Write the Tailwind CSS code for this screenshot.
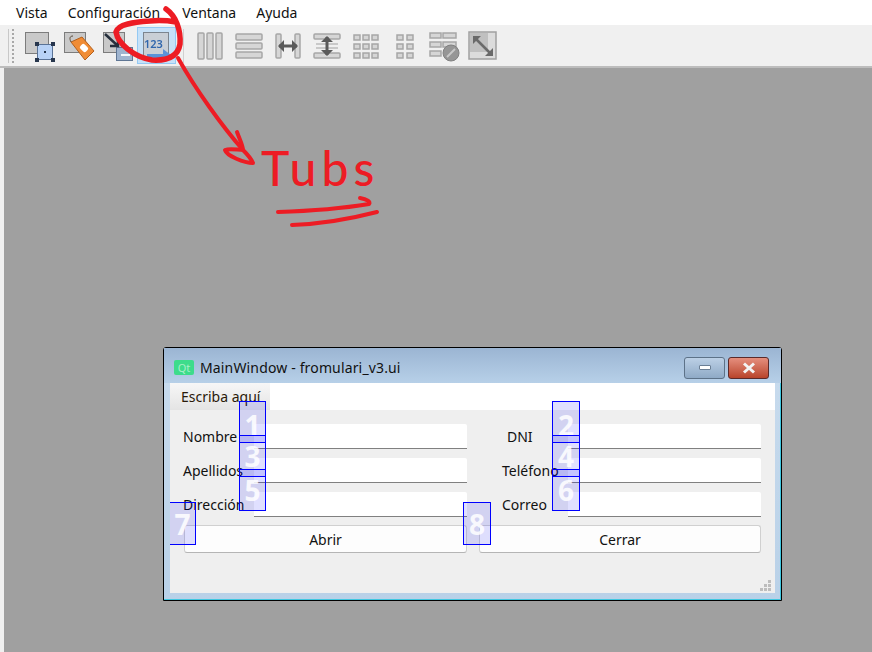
<!DOCTYPE html>
<html lang="en">

<head>
    <meta charset="UTF-8">
    <title>Qt Designer - Tabs</title>
    <script src="https://cdn.jsdelivr.net/npm/@tailwindcss/browser@4"></script>
</head>

<body class="w-[872px] h-[652px] overflow-hidden bg-[#f0f0f0] font-['Noto_Sans',sans-serif] text-[14px] text-[#111]">
    <div class="relative w-[872px] h-[652px] flex flex-col">

        <!-- Menu bar -->
        <nav class="h-[25px] bg-white flex items-center pl-[16px]">
            <span>Vista</span>
            <span class="ml-[20px]">Configuración</span>
            <span class="ml-[22px]">Ventana</span>
            <span class="ml-[20px]">Ayuda</span>
        </nav>

        <!-- Toolbar -->
        <div class="h-[43px] bg-[#f0f0f0] border-b-2 border-[#bdbdbd] flex items-center pl-[8px]">
            <div class="w-px h-[34px] bg-[#c8c8c8]"></div>
            <div class="w-[3px] h-[34px] ml-[3px] border-l-2 border-dotted border-[#a8a8a8]"></div>

            <div class="w-[39px] ml-[5px] flex justify-center blur-[0.4px]">
                <svg width="32" height="32" viewBox="0 0 32 32">
                    <rect x="1.5" y="2.5" width="23" height="21" fill="#c9c9c9" stroke="#7c7c7c" />
                    <rect x="13.5" y="14.5" width="15" height="15" fill="#b8d2f6" stroke="#5a7396" />
                    <rect x="11" y="12" width="4" height="4" fill="#27364d" />
                    <rect x="27" y="12" width="4" height="4" fill="#27364d" />
                    <rect x="11" y="28" width="4" height="4" fill="#27364d" />
                    <rect x="27" y="28" width="4" height="4" fill="#27364d" />
                    <rect x="20" y="21" width="2" height="2" fill="#27364d" />
                </svg>
            </div>
            <div class="w-[39px] flex justify-center blur-[0.4px]">
                <svg width="32" height="32" viewBox="0 0 32 32">
                    <rect x="1.5" y="2.5" width="21" height="20" fill="#c9c9c9" stroke="#7c7c7c" />
                    <path d="M8 12 L19 7 L31 21 L22 30 Z" fill="#f08c35" stroke="#b35f1c" />
                    <rect x="17" y="15" width="8" height="6" rx="2" transform="rotate(45 21 18)" fill="#fff" />
                    <path d="M8 12 C6 8 7 6 10 6" fill="none" stroke="#5a4a3a" />
                </svg>
            </div>
            <div class="w-[39px] flex justify-center blur-[0.4px]">
                <svg width="32" height="32" viewBox="0 0 32 32">
                    <rect x="1.5" y="2.5" width="21" height="20" fill="#c9c9c9" stroke="#7c7c7c" />
                    <rect x="14.5" y="17.5" width="16" height="13" fill="#9fb4cf" stroke="#5f7694" />
                    <rect x="19" y="24" width="9" height="2" fill="#f4f7fb" />
                    <path d="M3 4 L16 16 M16 8 L16 16 L8 16" fill="none" stroke="#26303d" stroke-width="2.5" />
                </svg>
            </div>
            <div class="w-[39px] h-[37px] bg-[#c6e1f8] border border-[#94c9f3] flex justify-center items-center">
                <svg class="blur-[0.4px]" width="32" height="32" viewBox="0 0 32 32">
                    <rect x="2.5" y="2.5" width="25" height="25" fill="#c9cfd6" stroke="#7c858f" />
                    <text x="3" y="18" font-size="11" font-family="Noto Sans" font-weight="600" fill="#2f66ad">123</text>
                    <path d="M6 24 H22 V19 L30 25 L22 31 V28 H6 Z" fill="#5a93d8" />
                </svg>
            </div>

            <div class="w-[14px] flex justify-center">
                <div class="w-px h-[34px] bg-[#d0d0d0]"></div>
            </div>

            <div class="w-[39px] flex justify-center blur-[0.4px]">
                <svg width="32" height="32" viewBox="0 0 32 32" fill="#d6d6d6" stroke="#a6a6a6" stroke-width="1.5">
                    <rect x="4" y="3" width="6" height="26" rx="1" />
                    <rect x="13" y="3" width="6" height="26" rx="1" />
                    <rect x="22" y="3" width="6" height="26" rx="1" />
                </svg>
            </div>
            <div class="w-[39px] flex justify-center blur-[0.4px]">
                <svg width="32" height="32" viewBox="0 0 32 32" fill="#d6d6d6" stroke="#a6a6a6" stroke-width="1.5">
                    <rect x="3" y="4" width="26" height="6" rx="1" />
                    <rect x="3" y="13" width="26" height="6" rx="1" />
                    <rect x="3" y="22" width="26" height="6" rx="1" />
                </svg>
            </div>
            <div class="w-[39px] flex justify-center blur-[0.4px]">
                <svg width="32" height="32" viewBox="0 0 32 32">
                    <rect x="4" y="4" width="5" height="24" rx="1" fill="#d6d6d6" stroke="#a6a6a6" stroke-width="1.5" />
                    <rect x="23" y="4" width="5" height="24" rx="1" fill="#d6d6d6" stroke="#a6a6a6" stroke-width="1.5" />
                    <path d="M7 16 H25" stroke="#5a5a5a" stroke-width="3" />
                    <path d="M12 10 L6 16 L12 22 Z M20 10 L26 16 L20 22 Z" fill="#5a5a5a" />
                </svg>
            </div>
            <div class="w-[39px] flex justify-center blur-[0.4px]">
                <svg width="32" height="32" viewBox="0 0 32 32">
                    <rect x="3" y="4" width="26" height="5" rx="1" fill="#d6d6d6" stroke="#a6a6a6" stroke-width="1.5" />
                    <rect x="3" y="23" width="26" height="5" rx="1" fill="#d6d6d6" stroke="#a6a6a6" stroke-width="1.5" />
                    <path d="M5 14 H27 M5 18 H27" stroke="#bcbcbc" stroke-width="1.5" />
                    <path d="M16 7 V25" stroke="#5a5a5a" stroke-width="3" />
                    <path d="M10 12 L16 6 L22 12 Z M10 20 L16 26 L22 20 Z" fill="#5a5a5a" />
                </svg>
            </div>
            <div class="w-[39px] flex justify-center blur-[0.4px]">
                <svg width="32" height="32" viewBox="0 0 32 32" fill="#d6d6d6" stroke="#a6a6a6" stroke-width="1.5">
                    <rect x="4" y="5" width="6" height="5" /><rect x="13" y="5" width="6" height="5" /><rect x="22" y="5" width="6" height="5" />
                    <rect x="4" y="14" width="6" height="5" /><rect x="13" y="14" width="6" height="5" /><rect x="22" y="14" width="6" height="5" />
                    <rect x="4" y="23" width="6" height="5" /><rect x="13" y="23" width="6" height="5" /><rect x="22" y="23" width="6" height="5" />
                </svg>
            </div>
            <div class="w-[39px] flex justify-center blur-[0.4px]">
                <svg width="32" height="32" viewBox="0 0 32 32" fill="#d6d6d6" stroke="#a6a6a6" stroke-width="1.5">
                    <rect x="8" y="5" width="6" height="5" /><rect x="18" y="5" width="6" height="5" />
                    <rect x="8" y="14" width="6" height="5" /><rect x="18" y="14" width="6" height="5" />
                    <rect x="8" y="23" width="6" height="5" /><rect x="18" y="23" width="6" height="5" />
                </svg>
            </div>
            <div class="w-[39px] flex justify-center blur-[0.4px]">
                <svg width="32" height="32" viewBox="0 0 32 32">
                    <g fill="#d6d6d6" stroke="#a6a6a6" stroke-width="1.5">
                        <rect x="2" y="3" width="11" height="5" /><rect x="15" y="3" width="13" height="5" />
                        <rect x="2" y="12" width="11" height="5" /><rect x="15" y="12" width="13" height="5" />
                        <rect x="2" y="21" width="11" height="5" />
                    </g>
                    <circle cx="23" cy="23" r="8" fill="#969696" stroke="#808080" />
                    <path d="M19 27 L27 19" stroke="#c8c8c8" stroke-width="2" />
                </svg>
            </div>
            <div class="w-[39px] flex justify-center blur-[0.4px]">
                <svg width="32" height="32" viewBox="0 0 32 32">
                    <rect x="2" y="2" width="27" height="27" fill="#dcdcdc" stroke="#a0a0a0" stroke-width="1.5" />
                    <rect x="3" y="3" width="18" height="19" fill="#c0c0c0" />
                    <path d="M8 8 L24 24" stroke="#6a6a6a" stroke-width="2.5" />
                    <path d="M6 14 V6 H14 Z M26 18 V26 H18 Z" fill="#6a6a6a" />
                </svg>
            </div>
        </div>

        <!-- Designer canvas -->
        <main class="flex-1 ml-[4px] bg-[#a0a0a0]"></main>

        <!-- Preview window -->
        <section class="absolute left-[163px] top-[347px] w-[619px] h-[254px] border border-black rounded-t-[3px] bg-gradient-to-b from-[#c9dcee] to-[#b9d1e8] shadow-[inset_-1px_-1px_0_#3fc7e0] flex flex-col">
            <header class="h-[35px] shrink-0 bg-gradient-to-b from-[#9bb5d3] to-[#b7d0e8] flex items-center pt-[4px] pl-[10px] pr-[12px]">
                <div class="w-[20px] h-[15px] rounded-[2px] bg-[#3ddc8b] text-[#a8efc9] text-[11px] leading-[15px] text-center">Qt</div>
                <span class="ml-[6px] text-[14px] tracking-[0.15px]">MainWindow - fromulari_v3.ui</span>
                <div class="ml-auto flex gap-[3px]">
                    <div class="w-[41px] h-[22px] rounded-[3px] border border-[#5d7288] bg-gradient-to-b from-[#bcd0e6] to-[#8faac6] flex items-center justify-center">
                        <div class="w-[12px] h-[5px] bg-white border border-[#6b7f95] rounded-[1px]"></div>
                    </div>
                    <div class="w-[41px] h-[22px] rounded-[3px] border border-[#5b2a2a] bg-gradient-to-b from-[#e58f7e] to-[#b8432a] flex items-center justify-center">
                        <svg width="14" height="12" viewBox="0 0 14 12">
                            <path d="M2 1.5 L12 10.5 M12 1.5 L2 10.5" stroke="#f3f3f3" stroke-width="3" />
                        </svg>
                    </div>
                </div>
            </header>

            <div class="flex-1 mx-[6px] mb-[7px] bg-[#efefef] flex flex-col">
                <div class="h-[27px] bg-white">
                    <div class="w-[100px] h-[27px] pl-[11px] leading-[27px] bg-gradient-to-b from-[#f7f7f7] to-[#e4e4e4] text-[#2a1a0a]">Escriba aquí</div>
                </div>

                <!-- Form rows -->
                <div class="pl-[13px] pr-[13px] pt-[14px] grid grid-cols-[71px_213px_12px_89px_193px] auto-rows-[25px] gap-y-[9px] items-center">
                    <span>Nombre</span>
                    <div class="h-[25px] bg-white border-b border-[#808080] rounded-t-[2px]"></div>
                    <span></span>
                    <span class="pl-[28px]">DNI</span>
                    <div class="h-[25px] bg-white border-b border-[#808080] rounded-t-[2px]"></div>

                    <span>Apellidos</span>
                    <div class="h-[25px] bg-white border-b border-[#808080] rounded-t-[2px]"></div>
                    <span></span>
                    <span class="pl-[23px]">Teléfono</span>
                    <div class="h-[25px] bg-white border-b border-[#808080] rounded-t-[2px]"></div>

                    <span>Dirección</span>
                    <div class="h-[25px] bg-white border-b border-[#808080] rounded-t-[2px]"></div>
                    <span></span>
                    <span class="pl-[23px]">Correo</span>
                    <div class="h-[25px] bg-white border-b border-[#808080] rounded-t-[2px]"></div>
                </div>

                <div class="pl-[14px] pr-[13px] pt-[8px] flex gap-[12px]">
                    <button class="w-[283px] h-[28px] bg-[#fdfdfd] border border-[#d0d0d0] border-b-[#b5b5b5] rounded-[3px]">Abrir</button>
                    <button class="w-[282px] h-[28px] bg-[#fdfdfd] border border-[#d0d0d0] border-b-[#b5b5b5] rounded-[3px]">Cerrar</button>
                </div>
            </div>

            <!-- Size grip -->
            <svg class="absolute right-[9px] bottom-[8px]" width="12" height="12" viewBox="0 0 12 12" fill="#bdbdbd">
                <rect x="8" y="0" width="3" height="3" />
                <rect x="4" y="4" width="3" height="3" /><rect x="8" y="4" width="3" height="3" />
                <rect x="0" y="8" width="3" height="3" /><rect x="4" y="8" width="3" height="3" /><rect x="8" y="8" width="3" height="3" />
            </svg>
        </section>

        <!-- Tab order badges -->
        <div class="absolute left-[239px] top-[401px] w-[27px] h-[42px] pt-[6px] border-[1.5px] border-[#0000ff] bg-[#0000ff]/12 flex items-center justify-center text-white/85 font-bold text-[28px] leading-none font-['Open_Sans',sans-serif]">1</div>
        <div class="absolute left-[239px] top-[435px] w-[27px] h-[42px] border-[1.5px] border-[#0000ff] bg-[#0000ff]/12 flex items-center justify-center text-white/85 font-bold text-[28px] leading-none font-['Open_Sans',sans-serif]">3</div>
        <div class="absolute left-[239px] top-[469px] w-[27px] h-[42px] border-[1.5px] border-[#0000ff] bg-[#0000ff]/12 flex items-center justify-center text-white/85 font-bold text-[28px] leading-none font-['Open_Sans',sans-serif]">5</div>
        <div class="absolute left-[552px] top-[401px] w-[28px] h-[42px] pt-[6px] border-[1.5px] border-[#0000ff] bg-[#0000ff]/12 flex items-center justify-center text-white/85 font-bold text-[28px] leading-none font-['Open_Sans',sans-serif]">2</div>
        <div class="absolute left-[552px] top-[435px] w-[28px] h-[42px] border-[1.5px] border-[#0000ff] bg-[#0000ff]/12 flex items-center justify-center text-white/85 font-bold text-[28px] leading-none font-['Open_Sans',sans-serif]">4</div>
        <div class="absolute left-[552px] top-[469px] w-[28px] h-[42px] border-[1.5px] border-[#0000ff] bg-[#0000ff]/12 flex items-center justify-center text-white/85 font-bold text-[28px] leading-none font-['Open_Sans',sans-serif]">6</div>
        <div class="absolute left-[170px] top-[502px] w-[26px] h-[43px] border-[1.5px] border-l-0 border-[#0000ff] bg-[#0000ff]/12 flex items-center justify-center text-white/85 font-bold text-[28px] leading-none font-['Open_Sans',sans-serif]">7</div>
        <div class="absolute left-[463px] top-[502px] w-[28px] h-[43px] border-[1.5px] border-[#0000ff] bg-[#0000ff]/12 flex items-center justify-center text-white/85 font-bold text-[28px] leading-none font-['Open_Sans',sans-serif]">8</div>

        <!-- Red annotations -->
        <svg class="absolute left-0 top-0 pointer-events-none" width="872" height="652" viewBox="0 0 872 652" fill="none" stroke="#ed1c24" stroke-linecap="round" stroke-linejoin="round">
            <path d="M166 9 C176 16 181 30 180 44 C178 56 168 61 152 60 C134 57 118 44 116 32 C118 24 134 22 150 21 C160 20 170 21 176 22" stroke-width="5.5" />
            <path d="M178 58 C196 90 222 126 243 150" stroke-width="4" />
            <path d="M237 132 C240 140 243 146 243 150 C238 150 230 148 225 150 C227 156 244 163 253 163 C251 158 247 154 243 150" stroke-width="4" />
            <path d="M278 212 C310 211 345 208 369 204 C371 202 367 199 360 198" stroke-width="4" />
            <path d="M292 225 C320 224 350 219 377 212" stroke-width="4" />
        </svg>
        <span class="absolute left-[261px] top-[138px] text-[#ed1c24] text-[48px] leading-[60px] font-medium tracking-[5px] font-['Lato',sans-serif]">Tubs</span>
    </div>
</body>

</html>
